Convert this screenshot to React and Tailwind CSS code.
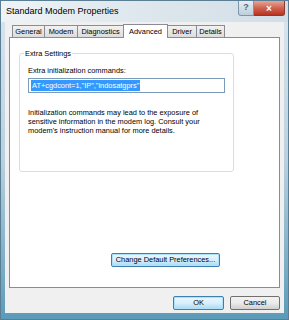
import React from 'react';

const font = { fontFamily: '"Liberation Sans", Arial, sans-serif' };

// tab strip on top of the property sheet
const tabs = [
  { label: 'General', w: 'w-[33px]' },
  { label: 'Modem', w: 'w-[34px]' },
  { label: 'Diagnostics', w: 'w-[47px]' },
  { label: 'Advanced', w: 'w-[45px]' },
  { label: 'Driver', w: 'w-[30px]' },
  { label: 'Details', w: 'w-[29px]' },
];

const Tab = ({ label, w, active }) => (
  <div
    className={
      active
        ? 'relative z-10 -mb-px -ml-px flex h-[14px] items-center justify-center border border-b-0 border-[#898c95] bg-white text-[7.4px] whitespace-nowrap text-black ' + w
        : 'mt-[1px] -ml-px flex h-[12px] items-center justify-center border border-b-0 border-[#898c95] bg-gradient-to-b from-[#f2f2f2] to-[#dcdcdc] text-[7.4px] whitespace-nowrap text-black ' + w
    }
  >
    {label}
  </div>
);

const AeroButton = ({ children, className = '', focused }) => (
  <div
    className={
      'flex h-[14px] items-center justify-center whitespace-nowrap rounded-[2px] border text-[7.4px] text-black ' +
      (focused
        ? 'border-[#3c7fb1] bg-gradient-to-b from-[#eaf6fd] via-[#d9f0fc] to-[#a7d9f5] shadow-[inset_0_0_0_1px_#aee0f8] '
        : 'border-[#707070] bg-gradient-to-b from-[#f2f2f2] via-[#ebebeb] to-[#cfcfcf] ') +
      className
    }
  >
    {children}
  </div>
);

export default function App() {
  return (
    <div
      className="flex h-[320px] w-[289px] flex-col overflow-hidden border border-[#5a7f95] bg-gradient-to-b from-[#dbe6ee] via-[#b9d0de] to-[#5b9bb8]"
      style={font}
    >
      {/* title bar */}
      <div className="flex h-[21px] shrink-0 items-start bg-gradient-to-r from-[#eef3f6] via-[#dde7ed] to-[#d2dee7]">
        <div className="pl-[5px] pt-[4px] text-[9px] text-black">Standard Modem Properties</div>
        <div className="ml-auto flex">
          <div className="flex h-[15px] w-[16px] items-center justify-center rounded-bl-[3px] border border-t-0 border-[#7d96a8] bg-gradient-to-b from-[#e6eef4] to-[#bccfdc] text-[9px] font-bold text-[#4c6a80]">
            ?
          </div>
          <div className="mr-[3px] flex h-[15px] w-[31px] items-center justify-center rounded-br-[3px] border border-l-0 border-t-0 border-[#8a3a2f] bg-gradient-to-b from-[#e7a597] via-[#cf6250] to-[#b8321c] text-[10px] font-bold text-white">
            ×
          </div>
        </div>
      </div>

      {/* client area */}
      <div className="mx-[4px] mb-[6px] flex flex-1 flex-col bg-[#f0f0f0] px-[4px] pt-[2px]">
        <div className="flex items-end pl-[4px]">
          {tabs.map((t) => (
            <Tab key={t.label} label={t.label} w={t.w} active={t.label === 'Advanced'} />
          ))}
        </div>

        <div className="flex h-[251px] flex-col border border-[#898c95] bg-white px-[9px] pt-[15px]">
          {/* group box */}
          <div className="relative mr-[36px] h-[119px] rounded-[3px] border border-[#d5dfe5] px-[8px] pt-[12px]">
            <div className="absolute left-[4px] top-[-6px] bg-white px-[1px] text-[7.4px] text-black">Extra Settings</div>
            <div className="text-[7.4px] leading-[9px] text-black">Extra initialization commands:</div>
            <div className="mt-[3px] flex h-[15px] items-center border border-[#7a9cba] bg-white px-[2px]">
              <span className="bg-[#3399ff] px-[1px] text-[7.4px] leading-[11px] text-white">AT+cgdcont=1,"IP","indosatgprs"</span>
            </div>
            <p className="mt-[15px] text-[7.4px] leading-[9px] text-black">
              Initialization commands may lead to the exposure of
              <br />
              sensitive information in the modem log. Consult your
              <br />
              modem's instruction manual for more details.
            </p>
          </div>

          <div className="mt-auto mb-[20px] ml-[92px] flex">
            <AeroButton focused className="w-[109px]">Change Default Preferences...</AeroButton>
          </div>
        </div>

        <div className="mt-[8px] flex justify-end gap-[6px]">
          <AeroButton focused className="w-[51px]">OK</AeroButton>
          <AeroButton className="w-[50px]">Cancel</AeroButton>
        </div>
      </div>
    </div>
  );
}
